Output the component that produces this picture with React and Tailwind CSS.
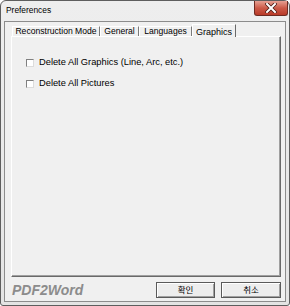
import React from 'react';

const ui = { fontFamily: '"Liberation Sans", Arial, sans-serif' };
const ko = { fontFamily: '"Liberation Sans", "Noto Sans CJK KR", sans-serif' };

function Tab({ label, width, selected }) {
  if (selected) {
    return (
      <div
        className={`relative z-10 -mb-px flex h-[13px] items-start justify-center border-l border-t border-r border-l-white border-t-white border-r-[#696969] bg-[#f0f0f0] pt-[1px] text-[9px] text-black ${width}`}
      >
        {label}
      </div>
    );
  }
  return (
    <div
      className={`flex h-[10px] items-center justify-center border-l border-t border-r border-l-white border-t-white border-r-[#7a7a7a] text-[8.6px] leading-none text-black ${width}`}
    >
      {label}
    </div>
  );
}

function Check({ label }) {
  return (
    <div className="flex items-center gap-[5px]">
      <div className="h-[8px] w-[8px] border border-t-[#808080] border-l-[#808080] border-b-[#dcdcdc] border-r-[#dcdcdc] bg-white" />
      <span className="text-[9.3px] leading-none text-black">{label}</span>
    </div>
  );
}

function Button({ label, width }) {
  return (
    <div
      className={`flex h-[16px] items-center justify-center border border-[#5a5a5a] bg-[#ededed] text-[8.5px] leading-none text-black shadow-[inset_1px_1px_0_#ffffff,inset_-1px_-1px_0_#a0a0a0] ${width}`}
      style={ko}
    >
      {label}
    </div>
  );
}

export default function App() {
  return (
    <div className="h-[306px] w-[290px] bg-white" style={ui}>
      <div className="flex h-[306px] w-[290px] flex-col rounded-t-[6px] rounded-b-[3px] border border-[#5e5e5e] bg-gradient-to-b from-[#eeeeee] to-[#e4e4e4] px-[3px] pb-[3px]">
        {/* title bar */}
        <div className="flex h-[20px] items-start justify-between">
          <span className="pl-[2px] pt-[5px] text-[8.4px] leading-none text-black">Preferences</span>
          <div className="-mr-[2px] flex h-[15px] w-[34px] items-center justify-center rounded-b-[3px] border border-t-0 border-[#6e2b22] bg-gradient-to-b from-[#e6a093] via-[#cc5a48] to-[#b83a28]">
            <svg width="12" height="10" viewBox="0 0 12 10">
              <path d="M2 1 L10 9 M10 1 L2 9" stroke="#4a1a14" strokeWidth="3.6" strokeLinecap="square" />
              <path d="M2 1 L10 9 M10 1 L2 9" stroke="#ffffff" strokeWidth="2" strokeLinecap="square" />
            </svg>
          </div>
        </div>

        {/* client area */}
        <div className="flex flex-1 flex-col border border-[#8c8c8c] bg-[#f0f0f0]">
          <div className="ml-[6px] mr-[4px] mt-[2px] flex flex-col">
            <div className="ml-[1px] flex items-end">
              <Tab label="Reconstruction Mode" width="w-[88px]" />
              <Tab label="General" width="w-[39px]" />
              <Tab label="Languages" width="w-[53px]" />
              <Tab label="Graphics" width="w-[44px]" selected />
            </div>
            <div className="flex h-[241px] flex-col gap-[12px] border border-t-white border-l-white border-r-[#696969] border-b-[#696969] pl-[14px] pt-[21px] shadow-[inset_-1px_-1px_0_#a0a0a0]">
              <Check label="Delete All Graphics (Line, Arc, etc.)" />
              <Check label="Delete All Pictures" />
            </div>
          </div>

          <div className="ml-[6px] mr-[4px] mt-[5px] flex items-center">
            <span className="pl-[1px] text-[14px] font-bold italic leading-none text-[#8c8c8c]">PDF2Word</span>
            <div className="ml-auto flex gap-[6px]">
              <Button label="확인" width="w-[59px]" />
              <Button label="취소" width="w-[60px]" />
            </div>
          </div>
        </div>
      </div>
    </div>
  );
}
